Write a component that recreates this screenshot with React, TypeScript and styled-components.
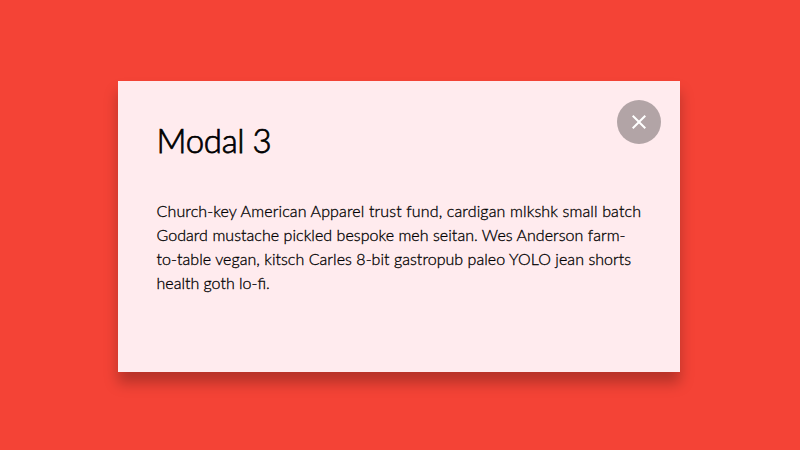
import React from "react";
import styled, { createGlobalStyle } from "styled-components";

const GlobalStyle = createGlobalStyle`
  * { box-sizing: border-box; }
  body { margin: 0; font-family: Lato, sans-serif; }
`;

const Overlay = styled.main`
  display: flex;
  justify-content: center;
  align-items: flex-start;
  height: 100vh;
  padding: 81px 2px 0 0;
  overflow: hidden;
  background: #f44336;
`;

const Modal = styled.section`
  display: flex;
  align-items: flex-start;
  position: relative;
  width: 562px;
  height: 291px;
  padding: 37px 38px 37px 38.5px;
  background: #ffebee;
  box-shadow: 0 11px 13px 0 rgba(0, 0, 0, 0.25);
`;

const Content = styled.div`
  flex: 1;
`;

const Title = styled.h1`
  margin: 0 0 37px;
  font-size: 33px;
  font-weight: 300;
  line-height: 44px;
  letter-spacing: -0.3px;
  word-spacing: -0.5px;
  -webkit-text-stroke: 0.75px #000;
  color: #000;
`;

const Copy = styled.p`
  margin: 0;
  font-size: 16px;
  font-weight: 300;
  line-height: 24px;
  -webkit-text-stroke: 0.3px #000;
  color: #000;
`;

const Line = styled.span<{ $tracking: number }>`
  display: block;
  white-space: nowrap;
  letter-spacing: ${({ $tracking }) => ($tracking ? `${$tracking}px` : "normal")};
`;

const CloseButton = styled.button`
  position: absolute;
  top: 19px;
  right: 19px;
  display: grid;
  place-items: center;
  width: 44px;
  height: 44px;
  padding: 0;
  border: 0;
  border-radius: 50%;
  background: rgba(0, 0, 0, 0.3);
  color: #fff;
`;

const copyLines = [
  { text: "Church-key American Apparel trust fund, cardigan mlkshk small batch", tracking: 0.135 },
  { text: "Godard mustache pickled bespoke meh seitan. Wes Anderson farm-", tracking: 0.05 },
  { text: "to-table vegan, kitsch Carles 8-bit gastropub paleo YOLO jean shorts", tracking: 0.05 },
  { text: "health goth lo-fi.", tracking: 0 },
];

export default function App() {
  return (
    <>
      <GlobalStyle />
      <Overlay>
        <Modal role="dialog" aria-labelledby="modal-title">
          <Content>
            <Title id="modal-title">Modal 3</Title>
            <Copy>
              {copyLines.map(({ text, tracking }) => (
                <Line key={text} $tracking={tracking}>
                  {text}
                </Line>
              ))}
            </Copy>
          </Content>
          <CloseButton aria-label="Close">
            <svg width="24" height="24" viewBox="0 0 24 24" fill="currentColor">
              <path d="M19 6.41L17.59 5 12 10.59 6.41 5 5 6.41 10.59 12 5 17.59 6.41 19 12 13.41 17.59 19 19 17.59 13.41 12z" />
            </svg>
          </CloseButton>
        </Modal>
      </Overlay>
    </>
  );
}
